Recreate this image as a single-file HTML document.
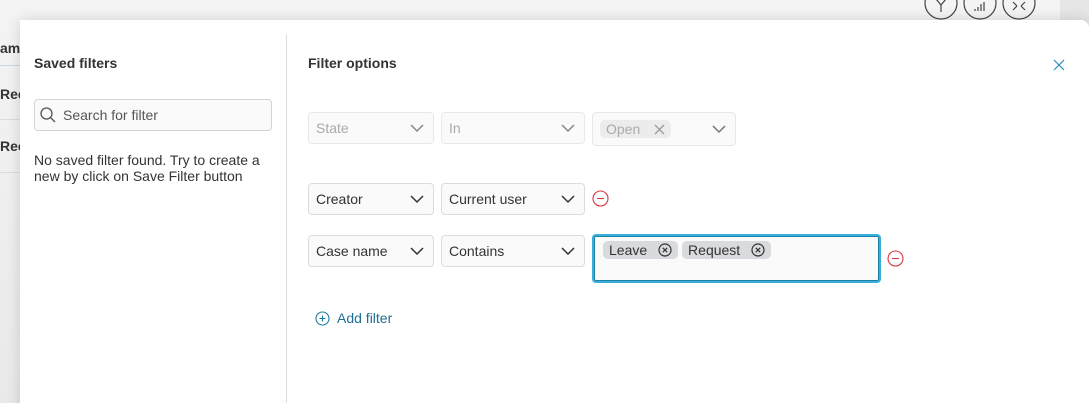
<!DOCTYPE html>
<html><head><style>
*{box-sizing:border-box;margin:0;padding:0}
html,body{width:1089px;height:403px;overflow:hidden}
body{background:#ececec;font-family:"Liberation Sans",sans-serif;position:relative;font-size:14px;color:#333}
.bg{position:absolute;left:0;top:0;width:1089px;height:403px;background:linear-gradient(#f4f4f4,#e9e9e9)}
.rt{position:absolute;left:1060px;top:0;width:29px;height:403px;background:#e6e6e6}
.modal{position:absolute;left:20px;top:20px;width:1069px;height:400px;background:#fff;border-radius:0 8px 0 0;box-shadow:0 0 14px rgba(0,0,0,.15)}
.abs{position:absolute}
.sel{position:absolute;height:32px;border:1px solid #dcdcdc;border-radius:4px;background:#fafafa;padding:0 7px;line-height:30px;font-size:14px;color:#333}
.sel svg{position:absolute;right:9px;top:11px}
.dis{color:#aaa;border-color:#e8e8e8}
.tag{display:inline-block;background:#d9dadd;border-radius:5px;height:18px;line-height:18px;padding:0 6px;font-size:14px;color:#333;margin-right:4px;vertical-align:top}
</style></head><body>
<div class="bg"></div>
<div class="rt"></div>
<div class="abs" style="left:0;top:40px;font-weight:bold;font-size:14px;color:#333">am</div>
<div class="abs" style="left:0;top:65px;width:20px;border-top:1px solid #c9d8de"></div>
<div class="abs" style="left:0;top:86px;font-weight:bold">Rec</div>
<div class="abs" style="left:0;top:119px;width:20px;border-top:1px solid #ddd"></div>
<div class="abs" style="left:0;top:138px;font-weight:bold">Rec</div>
<div class="abs" style="left:0;top:172px;width:20px;border-top:1px solid #ddd"></div>
<svg class="abs" style="left:924px;top:-14px" width="140" height="36" fill="none" stroke="#444" stroke-width="1.2">
<circle cx="17" cy="17" r="16"/><circle cx="56" cy="17" r="16"/><circle cx="95" cy="17" r="16"/>
<path d="M12 13l5 6v7M22 13l-5 6"/><path d="M51 25v-2M54 25v-4M57 25v-7M60 25v-9"/>
<path d="M89 16l4 4M101 16l-4 4M89 24l4-4M101 24l-4-4"/>
</svg>
<div class="modal">
<div class="abs" style="left:14px;top:35px;font-weight:bold;font-size:14px">Saved filters</div>
<div class="abs" style="left:14px;top:79px;width:238px;height:32px;border:1px solid #d4d4d4;border-radius:4px;background:#fafafa"></div>
<svg class="abs" style="left:20px;top:87px" width="16" height="16" fill="none" stroke="#555" stroke-width="1.3"><circle cx="6.5" cy="6.5" r="5.5"/><path d="M10.5 10.5l4.5 4.5"/></svg>
<div class="abs" style="left:43px;top:87px;color:#555">Search for filter</div>
<div class="abs" style="left:14px;top:132px;line-height:16px;width:240px">No saved filter found. Try to create a new by click on Save Filter button</div>
<div class="abs" style="left:266px;top:14px;height:380px;border-left:1px solid #ddd"></div>
<div class="abs" style="left:288px;top:35px;font-weight:bold">Filter options</div>
<svg class="abs" style="left:1033px;top:39px" width="12" height="12" stroke="#2a8fb5" stroke-width="1.2"><path d="M1 1l10 10M11 1L1 11"/></svg>
</div>
<div class="sel dis" style="left:308px;top:112px;width:126px">State<svg width="14" height="9" fill="none" stroke="#888" stroke-width="1.5"><path d="M1 1l6 6 6-6"/></svg></div>
<div class="sel dis" style="left:441px;top:112px;width:144px">In<svg width="14" height="9" fill="none" stroke="#888" stroke-width="1.5"><path d="M1 1l6 6 6-6"/></svg></div>
<div class="sel dis" style="left:592px;top:112px;width:144px;padding-left:7px;height:34px"><span class="tag" style="background:#ececec;color:#aaa;margin-top:7px;width:71px;position:relative">Open<svg style="position:absolute;right:6px;top:4px;left:auto" width="11" height="11" stroke="#999" stroke-width="1.3"><path d="M1 1l9 9M10 1L1 10"/></svg></span><svg width="14" height="9" fill="none" stroke="#777" stroke-width="1.5" style="top:12px"><path d="M1 1l6 6 6-6"/></svg></div>
<div class="sel" style="left:308px;top:183px;width:126px">Creator<svg width="14" height="9" fill="none" stroke="#333" stroke-width="1.5"><path d="M1 1l6 6 6-6"/></svg></div>
<div class="sel" style="left:441px;top:183px;width:144px">Current user<svg width="14" height="9" fill="none" stroke="#333" stroke-width="1.5"><path d="M1 1l6 6 6-6"/></svg></div>
<svg class="abs" style="left:592px;top:190px" width="17" height="17" fill="none" stroke="#d9363e" stroke-width="1.1"><circle cx="8.5" cy="8.5" r="7.5"/><path d="M5 8.5h7"/></svg>
<div class="sel" style="left:308px;top:235px;width:126px">Case name<svg width="14" height="9" fill="none" stroke="#333" stroke-width="1.5"><path d="M1 1l6 6 6-6"/></svg></div>
<div class="sel" style="left:441px;top:235px;width:144px">Contains<svg width="14" height="9" fill="none" stroke="#333" stroke-width="1.5"><path d="M1 1l6 6 6-6"/></svg></div>
<div class="abs" style="left:592px;top:234px;width:289px;height:49px;border:2px solid #36b0db;border-radius:4px;background:#fafafa;padding:5px 0 0 9px;box-shadow:inset 0 0 0 1px #1c7fa3">
<span class="tag">Leave <svg style="margin-left:7px;vertical-align:-2px" width="14" height="14" fill="none" stroke="#333" stroke-width="1.2"><circle cx="7" cy="7" r="6"/><path d="M4.8 4.8l4.4 4.4M9.2 4.8l-4.4 4.4"/></svg></span><span class="tag">Request <svg style="margin-left:7px;vertical-align:-2px" width="14" height="14" fill="none" stroke="#333" stroke-width="1.2"><circle cx="7" cy="7" r="6"/><path d="M4.8 4.8l4.4 4.4M9.2 4.8l-4.4 4.4"/></svg></span>
</div>
<svg class="abs" style="left:887px;top:250px" width="17" height="17" fill="none" stroke="#d9363e" stroke-width="1.1"><circle cx="8.5" cy="8.5" r="7.5"/><path d="M5 8.5h7"/></svg>
<svg class="abs" style="left:315px;top:311px" width="15" height="15" fill="none" stroke="#1f7a9e" stroke-width="1.1"><circle cx="7.5" cy="7.5" r="6.5"/><path d="M4.5 7.5h6M7.5 4.5v6"/></svg>
<div class="abs" style="left:337px;top:310px;color:#1f6f92">Add filter</div>
</body></html>
